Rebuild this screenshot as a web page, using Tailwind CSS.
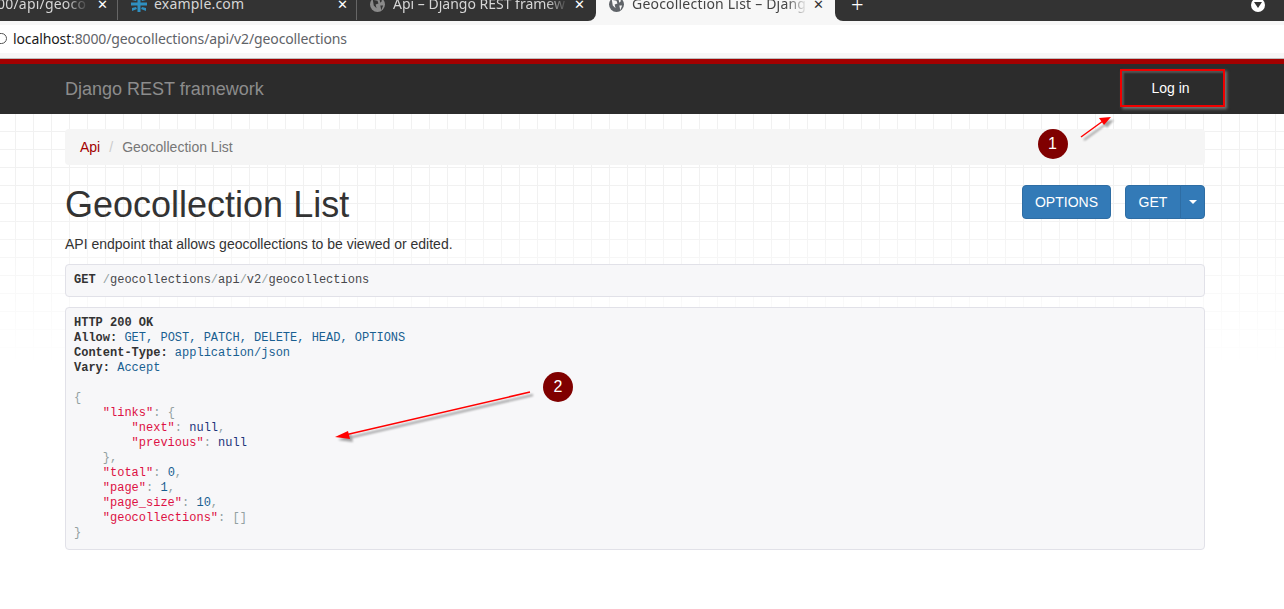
<!DOCTYPE html>
<html lang="en">
<head>
    <meta charset="UTF-8">
    <title>Geocollection List – Django REST framework</title>
    <script src="https://cdn.jsdelivr.net/npm/@tailwindcss/browser@4"></script>
</head>
<body class="relative w-[1284px] h-[609px] overflow-hidden bg-white font-['Liberation_Sans',sans-serif] text-[14px] text-[#333]">

    <!-- browser tabs -->
    <div class="h-[21px] bg-[#f7f7f7] flex overflow-hidden font-['Noto_Sans',sans-serif] text-[14px] text-[#d6d6d6] leading-[20px]">
        <div class="w-[118px] shrink-0 h-[21px] bg-[#333333]">
            <div class="flex items-center -mt-[12px] h-[32px] border-r border-[#666]">
                <span class="w-[92px] -ml-[3px] mr-[8px] overflow-hidden whitespace-nowrap tracking-[0.2px] [mask-image:linear-gradient(90deg,black_75%,transparent)]">00/api/geoco</span>
                <span class="text-white text-[13px]">✕</span>
            </div>
        </div>
        <div class="w-[239px] shrink-0 h-[21px] bg-[#333333]">
            <div class="flex items-center -mt-[12px] h-[32px] border-r border-[#666] pl-[12px]">
                <svg class="w-[18px] h-[18px] mr-[6px] shrink-0" viewBox="0 0 18 18" fill="#2f8fc0"><rect x="7.5" y="1" width="3" height="16"/><rect x="1" y="7.5" width="16" height="3"/><path d="M2 2l5 2-1 2-4-1zM16 2l-5 2 1 2 4-1zM2 16l5-2-1-2-4 1zM16 16l-5-2 1-2 4 1z"/></svg>
                <span class="w-[183px] whitespace-nowrap tracking-[0.2px]">example.com</span>
                <span class="text-white text-[13px]">✕</span>
            </div>
        </div>
        <div class="w-[239px] shrink-0 h-[21px] bg-[#333333] rounded-br-[8px]">
            <div class="flex items-center -mt-[12px] h-[32px] pl-[13px]">
                <svg class="w-[15px] h-[15px] mr-[8px] shrink-0" viewBox="0 0 16 16"><circle cx="8" cy="8" r="8" fill="#8a8a8a"/><path d="M3 3l5 1 1 3-3 1 1 4-3-3zM10 2l3 2-2 2zM11 9l3 0-2 5z" fill="#333"/></svg>
                <span class="w-[181px] overflow-hidden whitespace-nowrap [mask-image:linear-gradient(90deg,black_85%,transparent_97%)]">Api – Django REST framew</span>
                <span class="text-white text-[13px]">✕</span>
            </div>
        </div>
        <div class="w-[239px] shrink-0 h-[21px]">
            <div class="flex items-center -mt-[12px] h-[32px] pl-[13px] text-[#444]">
                <svg class="w-[15px] h-[15px] mr-[8px] shrink-0" viewBox="0 0 16 16"><circle cx="8" cy="8" r="8" fill="#5f6368"/><path d="M3 3l5 1 1 3-3 1 1 4-3-3zM10 2l3 2-2 2zM11 9l3 0-2 5z" fill="#f7f7f7"/></svg>
                <span class="w-[181px] overflow-hidden whitespace-nowrap tracking-[0.2px] [mask-image:linear-gradient(90deg,black_85%,transparent_97%)]">Geocollection List – Djang</span>
                <span class="text-[#333] text-[13px]">✕</span>
            </div>
        </div>
        <div class="flex-1 h-[21px] bg-[#333333] rounded-bl-[8px]">
            <div class="flex items-center justify-between -mt-[11px] h-[32px] pl-[16px] pr-[19px]">
                <span class="text-white text-[22px] font-light leading-none -mt-[2px]">+</span>
                <span class="w-[14px] h-[14px] rounded-full bg-white flex items-center justify-center">
                    <svg class="w-[8px] h-[6px]" viewBox="0 0 8 6"><path d="M0 0h8L4 6z" fill="#333"/></svg>
                </span>
            </div>
        </div>
    </div>

    <!-- address bar -->
    <div class="h-[38px] bg-[#f7f7f7] pt-[4px] border-b border-[#bdbdbd]">
        <div class="h-[28px] bg-white flex items-center font-['Noto_Sans',sans-serif] text-[14px] tracking-[-0.12px] pb-[2px]">
            <span class="w-[13px] shrink-0 -ml-[6px] mr-[6px] h-[11px] border border-[#555] rounded-full"></span>
            <span class="text-[#1a1a1a]">localhost</span><span class="text-[#5f6368]">:8000/geocollections/api/v2/geocollections</span>
        </div>
    </div>

    <!-- navbar -->
    <nav class="h-[55px] bg-[#2c2c2c] border-t-[5px] border-[#a30000] pl-[65px] pr-[59px] flex items-center justify-between">
        <span class="text-[18px] text-[#8c8c8c]">Django REST framework</span>
        <a class="w-[105px] h-[38px] -mt-[2px] pr-[4px] flex items-center justify-center text-white border-[2px] border-[#f00000] shadow-[inset_2px_2px_2px_#555,2px_2px_3px_#777]">Log in</a>
    </nav>

    <!-- faded grid behind the page -->
    <div class="absolute left-0 right-0 top-[114px] h-[251px] bg-[linear-gradient(to_bottom,transparent_35%,white),linear-gradient(#f1f1f1_1px,transparent_1px),linear-gradient(90deg,#f1f1f1_1px,transparent_1px)] bg-[size:100%_100%,18px_18px,18px_18px] bg-[position:0_0,0_17px,15px_0]"></div>

    <main class="relative mx-[65px] w-[1140px] pt-[15px]">
        <div class="h-[36px] bg-[#f5f5f5] rounded-[4px] px-[15px] flex items-center">
            <a class="text-[#a30000]">Api</a>
            <span class="text-[#ccc] px-[9px]">/</span>
            <span class="text-[#777]">Geocollection List</span>
        </div>

        <div class="flex justify-between mt-[20px]">
            <h1 class="text-[36px] leading-[40px]">Geocollection List</h1>
            <div class="flex gap-[14px]">
                <button class="w-[89px] h-[34px] bg-[#337ab7] border border-[#2e6da4] rounded-[4px] text-white">OPTIONS</button>
                <div class="flex">
                    <button class="w-[56px] h-[34px] bg-[#337ab7] border border-[#2e6da4] rounded-l-[4px] text-white">GET</button>
                    <button class="w-[25px] h-[34px] -ml-px bg-[#337ab7] border border-[#2e6da4] rounded-r-[4px] flex items-center justify-center">
                        <svg class="w-[8px] h-[4px]" viewBox="0 0 8 4"><path d="M0 0h8L4 4z" fill="#fff"/></svg>
                    </button>
                </div>
            </div>
        </div>

        <p class="mt-[9px] leading-[20px]">API endpoint that allows geocollections to be viewed or edited.</p>

        <pre class="mt-[10px] h-[33px] bg-[#f7f7f9] border border-[#e1e1e8] rounded-[4px] px-[8px] pt-[8px] font-['Liberation_Mono',monospace] text-[12px] leading-[15px] text-[#48484c]"><b class="text-[#333]">GET</b> <span class="text-[#93a1a1]">/</span>geocollections<span class="text-[#93a1a1]">/</span>api<span class="text-[#93a1a1]">/</span>v2<span class="text-[#93a1a1]">/</span>geocollections</pre>

        <pre class="mt-[10px] h-[243px] bg-[#f7f7f9] border border-[#e1e1e8] rounded-[4px] px-[8px] pt-[8px] font-['Liberation_Mono',monospace] text-[12px] leading-[15px] text-[#48484c]"><b class="text-[#333]">HTTP 200 OK</b>
<b class="text-[#333]">Allow:</b> <span class="text-[#195f91]">GET, POST, PATCH, DELETE, HEAD, OPTIONS</span>
<b class="text-[#333]">Content-Type:</b> <span class="text-[#195f91]">application/json</span>
<b class="text-[#333]">Vary:</b> <span class="text-[#195f91]">Accept</span>

<span class="text-[#93a1a1]">{</span>
    <span class="text-[#dd1144]">"links"</span><span class="text-[#93a1a1]">: {</span>
        <span class="text-[#dd1144]">"next"</span><span class="text-[#93a1a1]">:</span> <span class="text-[#1e347b]">null</span><span class="text-[#93a1a1]">,</span>
        <span class="text-[#dd1144]">"previous"</span><span class="text-[#93a1a1]">:</span> <span class="text-[#1e347b]">null</span>
    <span class="text-[#93a1a1]">},</span>
    <span class="text-[#dd1144]">"total"</span><span class="text-[#93a1a1]">:</span> <span class="text-[#195f91]">0</span><span class="text-[#93a1a1]">,</span>
    <span class="text-[#dd1144]">"page"</span><span class="text-[#93a1a1]">:</span> <span class="text-[#195f91]">1</span><span class="text-[#93a1a1]">,</span>
    <span class="text-[#dd1144]">"page_size"</span><span class="text-[#93a1a1]">:</span> <span class="text-[#195f91]">10</span><span class="text-[#93a1a1]">,</span>
    <span class="text-[#dd1144]">"geocollections"</span><span class="text-[#93a1a1]">: []</span>
<span class="text-[#93a1a1]">}</span></pre>
    </main>

    <!-- annotations on top of the screenshot -->
    <svg class="absolute left-0 top-0 pointer-events-none" width="1284" height="609" viewBox="0 0 1284 609">
        <g class="blur-[1px]" transform="translate(3 3)" fill="#000" opacity="0.35">
            <path d="M1081 137l22-16" stroke="#000" stroke-width="2"/><path d="M1111 117l-12 1 5 7z"/>
            <path d="M530 392L345 435" stroke="#000" stroke-width="2"/><path d="M335 437l13-6 2 8z"/>
        </g>
        <path d="M1081 137l22-16" stroke="#f00" stroke-width="1.5"/><path d="M1111 117l-12 1 5 7z" fill="#f00"/>
        <path d="M530 392L345 435" stroke="#f00" stroke-width="1.5"/><path d="M335 437l13-6 2 8z" fill="#f00"/>
    </svg>
    <span class="absolute left-[1038px] top-[129px] w-[30px] h-[30px] pr-[1px] rounded-full bg-[#800000] text-white text-[16px] flex items-center justify-center">1</span>
    <span class="absolute left-[543px] top-[372px] w-[30px] h-[30px] rounded-full bg-[#800000] text-white text-[16px] flex items-center justify-center">2</span>
</body>
</html>
